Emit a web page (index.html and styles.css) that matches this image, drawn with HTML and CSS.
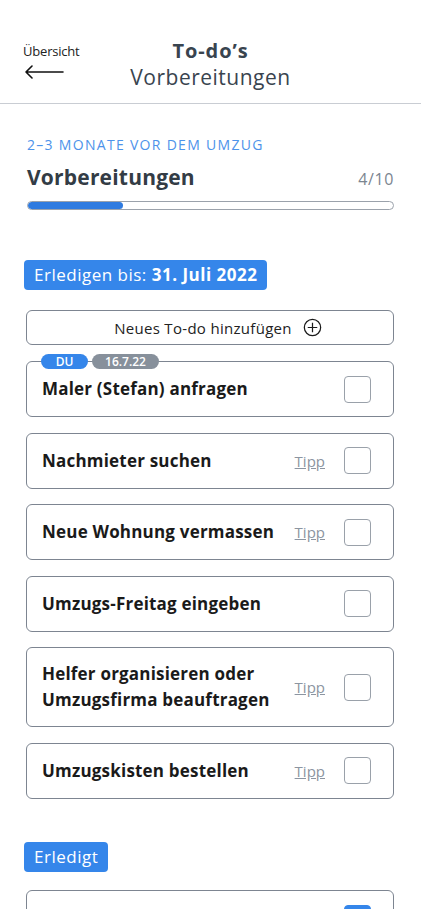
FILE: index.html
```html
<!DOCTYPE html>
<html lang="de">
<head>
<meta charset="utf-8">
<link rel="stylesheet" href="styles.css">
</head>
<body>
<header class="topbar">
  <a class="back">
    <span class="back-label">Übersicht</span>
    <svg class="back-arrow" width="40" height="14" viewBox="0 0 40 14"><path d="M39 7H2M8 1L2 7l6 6" fill="none" stroke="#111" stroke-width="1.6" stroke-linecap="round" stroke-linejoin="round"/></svg>
  </a>
  <div class="titles">
    <div class="title">To-do’s</div>
    <div class="subtitle">Vorbereitungen</div>
  </div>
</header>
<main class="content">
  <div class="phase">2–3 MONATE VOR DEM UMZUG</div>
  <div class="phase-row">
    <h1 class="phase-title">Vorbereitungen</h1>
    <span class="count">4/10</span>
  </div>
  <div class="progress"><div class="progress-fill" style="width:26%"></div></div>

  <div class="tag tag-due">Erledigen bis: <b>31. Juli 2022</b></div>

  <button class="add">Neues To-do hinzufügen
    <svg width="19" height="19" viewBox="0 0 20 20"><circle cx="10" cy="10" r="8.6" fill="none" stroke="#1a1a1a" stroke-width="1.3"/><path d="M10 5v10M5 10h10" stroke="#1a1a1a" stroke-width="1.3"/></svg>
  </button>

  <ul class="list">
    <li class="card">
      <div class="chips"><span class="chip chip-du">DU</span><span class="chip chip-date">16.7.22</span></div>
      <span class="card-title">Maler (Stefan) anfragen</span>
      <span class="box"></span>
    </li>
    <li class="card">
      <span class="card-title">Nachmieter suchen</span>
      <a class="tipp">Tipp</a>
      <span class="box"></span>
    </li>
    <li class="card">
      <span class="card-title">Neue Wohnung vermassen</span>
      <a class="tipp">Tipp</a>
      <span class="box"></span>
    </li>
    <li class="card">
      <span class="card-title">Umzugs-Freitag eingeben</span>
      <span class="box"></span>
    </li>
    <li class="card card-tall">
      <span class="card-title">Helfer organisieren oder<br>Umzugsfirma beauftragen</span>
      <a class="tipp">Tipp</a>
      <span class="box"></span>
    </li>
    <li class="card">
      <span class="card-title">Umzugskisten bestellen</span>
      <a class="tipp">Tipp</a>
      <span class="box"></span>
    </li>
  </ul>

  <div class="tag tag-done">Erledigt</div>

  <ul class="list list-done">
    <li class="card">
      <span class="card-title"></span>
      <span class="box box-checked"></span>
    </li>
  </ul>
</main>
</body>
</html>
```
FILE: styles.css
```css
* { box-sizing: border-box; }
html, body { margin: 0; padding: 0; background: #fff; }
body {
  font-family: "Open Sans", "Noto Sans", sans-serif;
  color: #1c1c1c;
  width: 421px;
  height: 909px;
  overflow: hidden;
}
.topbar {
  position: relative;
  height: 104px;
  border-bottom: 1px solid #c9cdd3;
  display: flex;
  justify-content: center;
  padding-top: 37px;
}
.back {
  position: absolute;
  left: 23px;
  top: 44px;
  display: flex;
  flex-direction: column;
  color: #222;
}
.back-label { font-size: 13px; line-height: 14px; letter-spacing: -0.2px; }
.back-arrow { margin-top: 7px; margin-left: 1px; }
.titles { text-align: center; color: #39444f; }
.title { font-size: 20px; font-weight: 700; line-height: 27px; letter-spacing: 0.9px; }
.subtitle { font-size: 21px; line-height: 26px; letter-spacing: 0.5px; }

.content { padding: 0 27px 0 24px; }
.phase {
  margin-top: 33px;
  margin-left: 3px;
  color: #4d93ea;
  font-size: 14px;
  line-height: 16px;
  letter-spacing: 1.3px;
}
.phase-row {
  margin: 10px 0 0 3px;
  display: flex;
  justify-content: space-between;
  align-items: baseline;
}
.phase-title { margin: 0; font-size: 21px; line-height: 28px; font-weight: 700; color: #333c45; letter-spacing: 0.2px; }
.count { font-size: 16px; color: #7b8590; letter-spacing: 0.6px; }
.progress {
  margin: 10px 0 0 3px;
  height: 9px;
  border: 1px solid #9ba2ab;
  border-radius: 5px;
  overflow: hidden;
}
.progress-fill { height: 100%; background: #2f7be0; border-radius: 4px; }

.tag {
  display: block;
  width: max-content;
  background: #3586ea;
  color: #fff;
  border-radius: 4px;
  font-size: 17px;
  line-height: 30px;
  padding: 0 10px;
  letter-spacing: 0.5px;
}
.tag b { font-weight: 700; }
.tag-due { margin-top: 50px; }
.tag-done { margin-top: 43px; }

.add {
  display: flex;
  align-items: center;
  justify-content: center;
  gap: 11px;
  width: calc(100% - 2px);
  margin: 20px 0 0 2px;
  height: 35px;
  background: #fff;
  border: 1px solid #7d8591;
  border-radius: 6px;
  font-family: inherit;
  font-size: 15px;
  letter-spacing: 0.3px;
  color: #222;
  padding: 0 0 0 16px;
}

.list { list-style: none; margin: 16px 0 0 2px; padding: 0; display: flex; flex-direction: column; gap: 15.6px; }
.list-done { margin-top: 18px; }
.card {
  position: relative;
  display: flex;
  align-items: center;
  min-height: 56px;
  border: 1px solid #7d8591;
  border-radius: 6px;
  padding: 0 22px 0 15px;
}
.card-tall { min-height: 80px; }
.card-title { flex: 1; font-size: 17px; font-weight: 700; line-height: 26px; color: #1a1a1a; letter-spacing: 0.2px; }
.tipp { color: #8c95a1; font-size: 15px; text-decoration: underline; margin-right: 19px; }
.box {
  width: 27px; height: 27px;
  border: 1px solid #9aa1aa;
  border-radius: 4px;
  flex: none;
}
.box-checked { background: #3586ea; border-color: #3586ea; align-self: flex-start; margin-top: 14px; }
.chips { position: absolute; left: 14px; top: -8px; display: flex; gap: 4px; }
.chip {
  font-size: 12px; line-height: 15px; height: 15px; color: #fff;
  border-radius: 8px; font-weight: 600; text-align: center;
}
.chip-du { background: #3586ea; width: 47px; }
.chip-date { background: #87909b; width: 67px; }
```
